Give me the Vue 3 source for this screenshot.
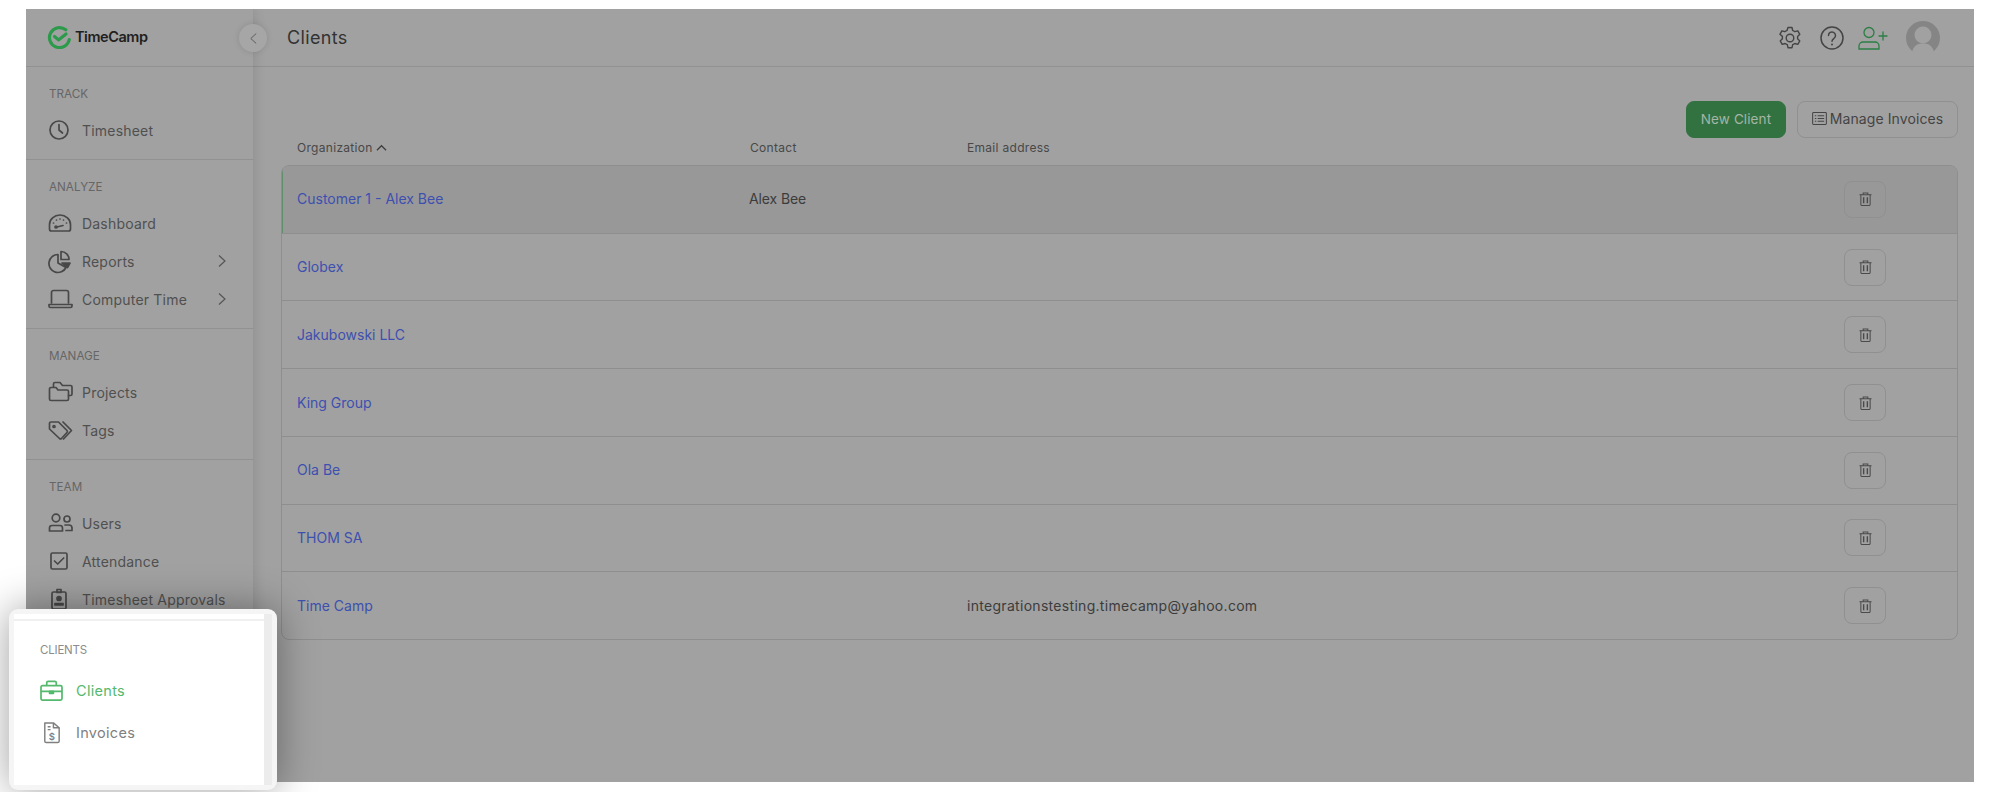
<script setup>
const sections = [
  { label: 'Track', items: [{ name: 'Timesheet', icon: 'clock' }] },
  { label: 'Analyze', items: [
    { name: 'Dashboard', icon: 'gauge' },
    { name: 'Reports', icon: 'pie', arrow: true },
    { name: 'Computer Time', icon: 'laptop', arrow: true },
  ] },
  { label: 'Manage', items: [
    { name: 'Projects', icon: 'folder' },
    { name: 'Tags', icon: 'tag' },
  ] },
  { label: 'Team', items: [
    { name: 'Users', icon: 'users' },
    { name: 'Attendance', icon: 'check' },
    { name: 'Timesheet Approvals', icon: 'badge' },
  ] },
]
const rows = [
  { org: 'Customer 1 - Alex Bee', contact: 'Alex Bee', email: '', active: true },
  { org: 'Globex', contact: '', email: '' },
  { org: 'Jakubowski LLC', contact: '', email: '' },
  { org: 'King Group', contact: '', email: '' },
  { org: 'Ola Be', contact: '', email: '' },
  { org: 'THOM SA', contact: '', email: '' },
  { org: 'Time Camp', contact: '', email: 'integrationstesting.timecamp@yahoo.com' },
]
</script>

<template>
  <div class="page">
    <div class="frame">
      <aside class="sidebar">
        <div class="brand">
          <svg class="logo" viewBox="0 0 24 24" width="24" height="24" fill="none" stroke="#2c9a4b" stroke-width="3.200" stroke-linecap="round" stroke-linejoin="round">
            <path d="M18.800 4.800A10 10 0 1 0 22.300 14.500" />
            <path d="M7.500 11.500l4 3.400 7.500-6" />
          </svg>
          <span class="brand-name">TimeCamp</span>
        </div>
        <section v-for="s in sections" :key="s.label" class="nav-section">
          <h4 class="nav-label">{{ s.label }}</h4>
          <a v-for="item in s.items" :key="item.name" class="nav-item">
            <svg class="nav-icon" viewBox="0 0 26 26" width="26" height="26" fill="none" stroke="currentColor" stroke-width="1.700" stroke-linecap="round" stroke-linejoin="round">
              <template v-if="item.icon === 'clock'">
                <circle cx="11" cy="13" r="9" /><path d="M11 7.500V13l3.500 3" />
              </template>
              <template v-else-if="item.icon === 'gauge'">
                <path d="M3.500 21A2 2 0 0 1 1.500 19v-4.500a10.500 9.500 0 0 1 21 0V19a2 2 0 0 1-2 2z" />
                <path d="M9 17l6-1.500" /><circle cx="8" cy="17" r="1" />
                <path d="M5.500 13h.01M8.500 10h.01M12 9h.01M15.500 10h.01M18.500 13h.01" />
              </template>
              <template v-else-if="item.icon === 'pie'">
                <path d="M10 6.500a9 9 0 1 0 8 13l-8-4.500z" />
                <path d="M13 3.500a8 8 0 0 1 8 8h-8z" />
                <path d="M14 15h8l-2.500 4.500z" fill="currentColor" />
              </template>
              <template v-else-if="item.icon === 'laptop'">
                <path d="M3.500 17V6.500a2 2 0 0 1 2-2h13a2 2 0 0 1 2 2V17" />
                <path d="M1 18.500h23v1.500a1.500 1.500 0 0 1-1.500 1.500h-20A1.500 1.500 0 0 1 1 20z" />
              </template>
              <template v-else-if="item.icon === 'folder'">
                <path d="M5.500 8V5a1.500 1.500 0 0 1 1.500-1.500h5l2.500 3h8A1.500 1.500 0 0 1 24 8v7a1.500 1.500 0 0 1-1.500 1.500h-2" />
                <path d="M1.500 10A1.500 1.500 0 0 1 3 8.500h5l2 2.500h9a1.500 1.500 0 0 1 1.500 1.500V20a1.500 1.500 0 0 1-1.500 1.500H3A1.500 1.500 0 0 1 1.500 20z" />
              </template>
              <template v-else-if="item.icon === 'tag'">
                <path d="M1.500 6.500A1.500 1.500 0 0 1 3 5h7.500L19 13.500a1.500 1.500 0 0 1 0 2l-5.500 6a1.500 1.500 0 0 1-2 0L1.500 12z" />
                <path d="M15 5l8.500 8.500-8 8.500" /><circle cx="6" cy="9.500" r="1" />
              </template>
              <template v-else-if="item.icon === 'users'">
                <circle cx="8" cy="8" r="3.800" /><circle cx="19" cy="9" r="3" />
                <path d="M1.500 21v-3A2.500 2.500 0 0 1 4 15.500h8a2.500 2.500 0 0 1 2.500 2.500v3z" />
                <path d="M17 15h4a3 3 0 0 1 3 3v2.500h-6" />
              </template>
              <template v-else-if="item.icon === 'check'">
                <rect x="3" y="5" width="16" height="16" rx="1.500" /><path d="M6.500 13l3.200 3 6-6" />
              </template>
              <template v-else-if="item.icon === 'badge'">
                <rect x="4" y="6" width="14" height="17" rx="1.500" /><rect x="9" y="3.500" width="4" height="3" />
                <circle cx="11" cy="12.500" r="2" fill="currentColor" /><path d="M7 19v-1.500h8V19z" fill="currentColor" />
              </template>
            </svg>
            <span class="nav-text">{{ item.name }}</span>
            <svg v-if="item.arrow" class="nav-arrow" viewBox="0 0 10 14" width="10" height="14" fill="none" stroke="currentColor" stroke-width="1.200"><path d="M2 1.500L8 7l-6 5.500" /></svg>
          </a>
        </section>
      </aside>

      <button class="collapse" aria-label="Collapse">
        <svg viewBox="0 0 10 14" width="9" height="13" fill="none" stroke="#555" stroke-width="1"><path d="M8 1.500L2 7l6 5.500" /></svg>
      </button>

      <div class="main">
        <header class="topbar">
          <h1 class="title">Clients</h1>
          <div class="top-actions">
            <svg viewBox="0 0 24 24" width="24" height="24" fill="none" stroke="#444" stroke-width="1.400" stroke-linejoin="round">
              <path d="M10 1.500h4l.7 3 2.200 1.200 2.900-.9 2 3.500-2.200 2.100v2.400l2.200 2.100-2 3.500-2.900-.9-2.200 1.200-.7 3h-4l-.7-3-2.200-1.200-2.900.9-2-3.500 2.200-2.100v-2.400L1.900 8.300l2-3.500 2.900.9L9 4.500z" />
              <circle cx="12" cy="12" r="3.800" />
            </svg>
            <svg viewBox="0 0 24 24" width="24" height="24" fill="none" stroke="#444" stroke-width="1.500" stroke-linecap="round">
              <circle cx="12" cy="12" r="11" />
              <path d="M8.500 9.500a3.500 3.500 0 1 1 5.500 2.800c-1.200.9-2 1.500-2 3" /><path d="M12 18.500h.01" stroke-width="2" />
            </svg>
            <svg class="add-user" viewBox="0 0 30 24" width="30" height="24" fill="none" stroke="#2b7f44" stroke-width="1.300" stroke-linecap="round">
              <circle cx="11" cy="6.500" r="5" />
              <path d="M1 23v-3a4 4 0 0 1 4-4h12a4 4 0 0 1 4 4v3z" />
              <path d="M21 10h8M25 6v8" />
            </svg>
            <svg class="avatar" viewBox="0 0 34 34" width="34" height="34">
              <circle cx="17" cy="17" r="17" fill="#858585" />
              <circle cx="17" cy="14" r="8.500" fill="#a1a1a1" />
              <path d="M6 31c1.500-6 5-8.500 11-8.500s9.500 2.500 11 8.500a17 17 0 0 1-22 0z" fill="#a1a1a1" />
            </svg>
          </div>
        </header>

        <div class="content">
          <div class="toolbar">
            <button class="btn btn-primary">New Client</button>
            <button class="btn btn-outline">
              <svg viewBox="0 0 16 14" width="15" height="13" fill="none" stroke="#444" stroke-width="1.100"><rect x=".6" y=".6" width="14.800" height="12.800" rx="1" /><path d="M3 4h1.500M6 4h7M3 7h1.500M6 7h7M3 10h1.500M6 10h7" /></svg>
              Manage Invoices
            </button>
          </div>
          <div class="table-head">
            <span class="sort">Organization
              <svg viewBox="0 0 12 8" width="11" height="8" fill="none" stroke="#3c3c3c" stroke-width="1.300"><path d="M1 6.500L6 1.500l5 5" /></svg>
            </span>
            <span>Contact</span>
            <span>Email address</span>
          </div>
          <div class="table">
            <div v-for="r in rows" :key="r.org" class="row" :class="{ active: r.active }">
              <a class="org">{{ r.org }}</a>
              <span class="cell contact">{{ r.contact }}</span>
              <span class="cell">{{ r.email }}</span>
              <button class="del" aria-label="Delete">
                <svg viewBox="0 0 14 15" width="13" height="14" fill="none" stroke="#4a4a4a" stroke-width="1.100"><path d="M.5 3h13M4.500 3V1h5v2" /><path d="M2 3v10.500a1 1 0 0 0 1 1h8a1 1 0 0 0 1-1V3" /><path d="M5 5.500v6.500M9 5.500v6.500" stroke-width="1.500" /></svg>
              </button>
            </div>
          </div>
        </div>
      </div>

      <div class="popup">
        <div class="popup-inner">
          <div class="popup-rule"></div>
          <h4 class="popup-label">Clients</h4>
          <a class="popup-item on">
            <svg viewBox="0 0 24 22" width="23" height="21" fill="none" stroke="currentColor" stroke-width="1.800" stroke-linejoin="round">
              <rect x="1" y="6" width="22" height="15" rx="1.500" /><path d="M7 6V3a1.500 1.500 0 0 1 1.500-1.500h7A1.500 1.500 0 0 1 17 3v3M1 12h22" /><path d="M10 12h4v2h-4z" fill="currentColor" />
            </svg>
            <span>Clients</span>
          </a>
          <a class="popup-item">
            <svg viewBox="0 0 24 24" width="23" height="23" fill="none" stroke="currentColor" stroke-width="1.500" stroke-linejoin="round">
              <path d="M5 2h9l6 5v14a1.500 1.500 0 0 1-1.500 1.500h-12A1.500 1.500 0 0 1 5 21z" /><path d="M14 2v5h6M8 6h3M8 9h3" />
              <text x="12.500" y="19.500" text-anchor="middle" font-size="10" font-family="Inter" fill="currentColor" stroke="none" font-weight="600">$</text>
            </svg>
            <span>Invoices</span>
          </a>
        </div>
      </div>
    </div>
  </div>
</template>

<style>
html, body { margin: 0; background: #fff; }
</style>

<style scoped>
.page {
  width: 2000px;
  height: 792px;
  box-sizing: border-box;
  padding: 9px 26px 10px;
  overflow: hidden;
  font-family: Inter, "Noto Sans", sans-serif;
  color: #4a4a4a;
}
.frame {
  position: relative;
  display: flex;
  width: 1948px;
  height: 773px;
  background: #a1a1a1;
}
.sidebar {
  width: 227px;
  flex: none;
  overflow: hidden;
  box-shadow: 0 0 12px rgba(0, 0, 0, .14);
  clip-path: inset(0 -24px 0 0);
  background: #a1a1a1;
  z-index: 1;
}
.brand {
  height: 57px;
  display: flex;
  align-items: center;
  gap: 4px;
  padding-left: 21px;
  border-bottom: 1px solid #919191;
}
.brand-name { font-size: 14.500px; font-weight: 600; color: #1f1f1f; letter-spacing: -.45px; margin-top: -2px; }
.logo { margin-top: -2px; }
.nav-section { padding: 18px 0 10px; border-bottom: 1px solid #919191; }
.nav-section:last-child { border-bottom: 0; }
.nav-label {
  margin: 0 0 10px;
  padding-left: 23px;
  font-size: 11.700px;
  line-height: 18px;
  height: 16px;
  font-weight: 400;
  color: #666;
  text-transform: uppercase;
}
.nav-item {
  height: 38px;
  display: flex;
  align-items: center;
  padding-left: 22px;
  font-size: 14px;
  letter-spacing: .2px;
  color: #505050;
}
.nav-icon { flex: none; margin-right: 8px; color: #484848; }
.nav-arrow { margin-left: auto; margin-right: 26px; color: #555; }
.collapse {
  position: absolute;
  left: 213px;
  top: 15px;
  width: 28px;
  height: 28px;
  border-radius: 50%;
  border: 0;
  padding: 0;
  background: #a6a6a6;
  box-shadow: 0 0 6px rgba(0, 0, 0, .12);
  display: flex;
  align-items: center;
  justify-content: center;
  z-index: 2;
}
.main { flex: 1; min-width: 0; display: flex; flex-direction: column; }
.topbar {
  height: 57px;
  flex: none;
  display: flex;
  align-items: center;
  justify-content: space-between;
  padding: 0 34px 0 34px;
  border-bottom: 1px solid #919191;
}
.title { margin: 0; font-size: 18px; font-weight: 400; color: #333; letter-spacing: .35px; }
.top-actions { display: flex; align-items: center; gap: 18px; }
.add-user { margin-left: -4px; }
.content { padding: 34px 16px 0 28px; }
.toolbar { display: flex; justify-content: flex-end; gap: 11px; }
.btn {
  height: 37px;
  box-sizing: border-box;
  border-radius: 8px;
  font: inherit;
  font-size: 14px;
  letter-spacing: .1px;
  padding: 0 0 2px;
  display: flex;
  align-items: center;
  justify-content: center;
  gap: 3px;
}
.btn-primary { width: 100px; background: #327240; border: 1px solid #327240; color: #a5b5a8; font-size: 13.500px; }
.btn-outline { width: 161px; background: transparent; border: 1px solid #909090; color: #444; }
.table-head {
  display: grid;
  grid-template-columns: 453px 217px 1fr;
  padding: 0 16px;
  margin-top: 1px;
  height: 26px;
  line-height: 18px;
  align-items: start;
  font-size: 12px;
  letter-spacing: .3px;
  color: #484848;
}
.sort { display: flex; align-items: center; gap: 3px; }
.table {
  height: 475px;
  box-sizing: border-box;
  border: 1px solid #8e8e8e;
  border-radius: 8px;
  display: flex;
  flex-direction: column;
  overflow: hidden;
}
.row {
  flex: 1;
  display: grid;
  grid-template-columns: 453px 217px 1fr 42px;
  align-items: center;
  padding: 0 71px 0 15px;
  border-bottom: 1px solid #8e8e8e;
  font-size: 14px;
  letter-spacing: .3px;
}
.row:last-child { border-bottom: 0; }
.row.active { background: #989898; box-shadow: inset 1px 0 0 #5f8f6c; }
.org { color: #3d50b0; letter-spacing: 0; margin-top: -1px; }
.cell { color: #3c3c3c; }
.contact { letter-spacing: -.1px; margin: -1px 0 0 -1px; }
.del {
  width: 42px;
  height: 37px;
  box-sizing: border-box;
  border: 1px solid #909090;
  border-radius: 8px;
  background: transparent;
  padding: 0;
  display: flex;
  align-items: center;
  justify-content: center;
}
.popup {
  position: absolute;
  left: -17px;
  top: 600px;
  width: 268px;
  height: 181px;
  box-sizing: border-box;
  padding: 5px 13px 5px 5px;
  border-radius: 9px;
  background: #f5f5f5;
  box-shadow: 0 0 40px rgba(0, 0, 0, .38);
  z-index: 3;
}
.popup-inner {
  height: 100%;
  box-sizing: border-box;
  background: #fff;
  padding: 5px 0 0 26px;
  box-shadow: 8px 0 0 #ececec;
}
.popup-rule { height: 2px; margin-left: -26px; background: #f0f0f0; }
.popup-label {
  margin: 21px 0 11px;
  font-size: 11.500px;
  line-height: 16px;
  font-weight: 400;
  color: #8c8c8c;
  text-transform: uppercase;
  letter-spacing: -.2px;
}
.popup-item {
  height: 42px;
  display: flex;
  align-items: center;
  gap: 13px;
  font-size: 14.500px;
  letter-spacing: .3px;
  color: #7f7f7f;
}
.popup-item.on { color: #54b96d; }
</style>
